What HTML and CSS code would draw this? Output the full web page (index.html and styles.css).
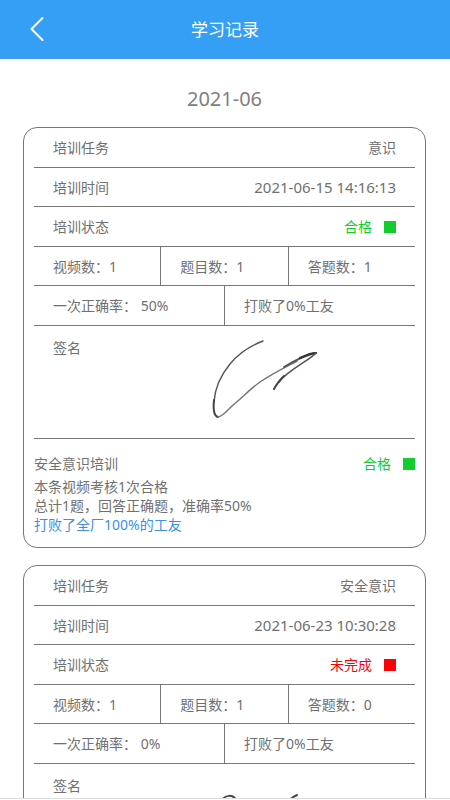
FILE: index.html
```
<!DOCTYPE html>
<html lang="zh-CN">
<head>
  <meta charset="UTF-8">
  <meta name="viewport" content="width=device-width, initial-scale=1.0">
  <title>学习记录</title>
  <link rel="stylesheet" href="styles.css">
</head>
<body>
  <header class="navbar">
    <button type="button" class="back" aria-label="返回">
      <svg width="16" height="26" viewBox="0 0 16 26"><path d="M13.5 2 L2.5 13 L13.5 24" fill="none" stroke="#fff" stroke-width="2" stroke-linecap="round" stroke-linejoin="round"/></svg>
    </button>
    <h1>学习记录</h1>
  </header>

  <main class="records">
    <h2 class="month">2021-06</h2>

    <section class="card">
      <div class="row"><span>培训任务</span><span>意识</span></div>
      <div class="row"><span>培训时间</span><span class="time">2021-06-15 14:16:13</span></div>
      <div class="row"><span>培训状态</span><span class="status pass">合格</span></div>
      <div class="row cells"><span>视频数：1</span><span>题目数：1</span><span>答题数：1</span></div>
      <div class="row cells"><span>一次正确率： 50%</span><span>打败了0%工友</span></div>
      <div class="sign">
        <span>签名</span>
        <svg class="signature" width="140" height="112" viewBox="0 0 140 112" fill="none" stroke-linecap="round">
          <path d="M63 15 C50 20 38 28 30 38 C20 50 15 62 14 76" stroke="#555" stroke-width="1.4"/>
          <path d="M14 74 C13 84 14 90 18 91" stroke="#444" stroke-width="2"/>
          <path d="M18 91 C22 91 27 85 32 80 C42 72 50 63 60 56 C72 48 84 42 97 35" stroke="#777" stroke-width="1.5"/>
          <path d="M84 41 C94 35 105 29 116 27" stroke="#555" stroke-width="1.8"/>
          <path d="M100 32 C106 29 112 27 116 27" stroke="#333" stroke-width="2.2"/>
          <path d="M116 27 C110 34 88 44 79 56" stroke="#555" stroke-width="1.6"/>
          <path d="M84 50 C78 56 76 59 74 63" stroke="#444" stroke-width="2"/>
        </svg>
      </div>
      <div class="detail">
        <div class="detail-head"><span>安全意识培训</span><span class="status pass">合格</span></div>
        <p>本条视频考核1次合格</p>
        <p>总计1题，回答正确题，准确率50%</p>
        <p class="beat">打败了全厂100%的工友</p>
      </div>
    </section>

    <section class="card">
      <div class="row"><span>培训任务</span><span>安全意识</span></div>
      <div class="row"><span>培训时间</span><span class="time">2021-06-23 10:30:28</span></div>
      <div class="row"><span>培训状态</span><span class="status fail">未完成</span></div>
      <div class="row cells"><span>视频数：1</span><span>题目数：1</span><span>答题数：0</span></div>
      <div class="row cells"><span>一次正确率： 0%</span><span>打败了0%工友</span></div>
      <div class="sign">
        <span>签名</span>
        <svg class="signature" width="140" height="112" viewBox="0 0 140 112" fill="none" stroke="#444" stroke-width="2" stroke-linecap="round">
          <path d="M22 36 C25 31 33 30 36 36 C40 48 24 66 20 82"/>
          <path d="M97 31 C88 35 74 50 66 66 C60 78 72 84 86 74"/>
        </svg>
      </div>
    </section>
  </main>
  <footer class="bottom-bar"></footer>
</body>
</html>
```
FILE: styles.css
```
* {
  box-sizing: border-box;
}
body {
  display: flex;
  flex-direction: column;
  height: 100vh;
  margin: 0;
  background-color: #fff;
  color: #707070;
  font-family: "Noto Sans", "Noto Sans CJK SC", sans-serif;
  font-size: 14px;
  line-height: 19px;
}
h1, h2, p {
  margin: 0;
  font-weight: normal;
}
.navbar {
  display: grid;
  grid-template-columns: 48px 1fr 48px;
  align-items: center;
  flex: none;
  height: 59px;
  background-color: #349ff4;
  border-bottom: 1px solid #4a98d8;
  color: #fff;
}
.navbar h1 {
  padding-top: 2px;
  font-size: 17px;
  line-height: 24px;
  text-align: center;
}
.back {
  display: flex;
  justify-content: flex-end;
  padding: 0 3px 0 0;
  border: none;
  background: none;
  cursor: pointer;
}
.records {
  flex: 1;
  min-height: 0;
  padding: 0 24px 0 23px;
  overflow-y: auto;
  scrollbar-width: none;
}
.month {
  padding: 26px 0 14px;
  color: #808080;
  font-size: 20px;
  line-height: 28px;
  text-align: center;
}
.card {
  margin-bottom: 17px;
  padding: 0 10px;
  border: 1px solid #777;
  border-radius: 14px;
}
.row {
  display: flex;
  justify-content: space-between;
  align-items: center;
  height: 40px;
  padding: 0 19px;
  border-bottom: 1px solid #777;
}
.row:nth-child(even) {
  height: 39px;
}
.cells {
  align-items: stretch;
  padding: 0;
}
.cells span {
  display: flex;
  flex: 1;
  align-items: center;
  padding-left: 19px;
  border-right: 1px solid #777;
  white-space: pre;
}
.cells span:last-child {
  border-right: none;
}
.time {
  font-size: 15px;
}
.status {
  display: flex;
  align-items: center;
  gap: 12px;
}
.status::after {
  content: "";
  width: 12px;
  height: 12px;
  background-color: currentColor;
}
.pass {
  color: #10cc2c;
}
.fail {
  color: #f80408;
}
.sign {
  display: flex;
  height: 113px;
  padding-left: 19px;
  border-bottom: 1px solid #777;
}
.sign span {
  width: 119px;
  padding-top: 12px;
}
.signature {
  margin-left: 28px;
}
.detail {
  padding: 15px 0 13px;
}
.detail-head {
  display: flex;
  justify-content: space-between;
  margin-bottom: 4px;
}
.beat {
  color: #3d8fe8;
}
.bottom-bar {
  flex: none;
  height: 2px;
  border-top: 1px solid #ddd;
}
```
